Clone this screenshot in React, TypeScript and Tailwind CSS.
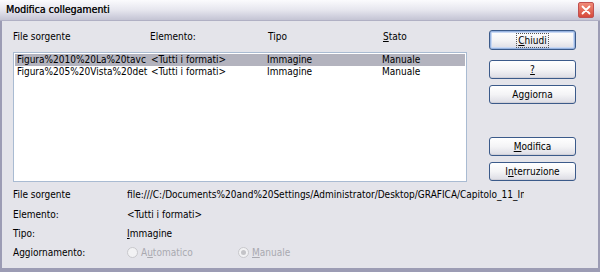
import { ReactNode } from "react";

const font = { fontFamily: '"DejaVu Sans Condensed", "Liberation Sans", Arial, sans-serif' };

function U({ children }: { children: ReactNode }) {
  return <span className="underline underline-offset-[1px]">{children}</span>;
}

function XpButton({
  children,
  isDefault = false,
}: {
  children: ReactNode;
  isDefault?: boolean;
}) {
  return (
    <button
      className={
        "w-[87px] rounded-[3px] border border-[#3b5a8a] bg-gradient-to-b from-[#ffffff] via-[#f4f4f6] to-[#dcdce4] text-black flex items-center justify-center " +
        (isDefault
          ? "h-[20px] shadow-[inset_0_0_0_1px_#98b4e0,inset_0_0_0_2px_#c8d8f4]"
          : "h-[19px] shadow-[inset_0_-1px_0_#d0d0d8]")
      }
    >
      {isDefault ? (
        <span className="outline outline-1 outline-dotted outline-[#555] px-[1px] leading-[13px]">
          {children}
        </span>
      ) : (
        children
      )}
    </button>
  );
}

function Radio({ checked, label }: { checked: boolean; label: ReactNode }) {
  return (
    <div className="flex items-center gap-[3px] text-[#a9a9b0]">
      <span className="w-[11px] h-[11px] rounded-full border border-[#c8c8cc] bg-[#f2f2f4] flex items-center justify-center">
        {checked && <span className="w-[5px] h-[5px] rounded-full bg-[#c4c4c8]" />}
      </span>
      <span>{label}</span>
    </div>
  );
}

const rows = [
  { file: "Figura%2010%20La%20tavc", el: "<Tutti i formati>", tipo: "Immagine", stato: "Manuale" },
  { file: "Figura%205%20Vista%20det", el: "<Tutti i formati>", tipo: "Immagine", stato: "Manuale" },
];

export default function App() {
  return (
    <div
      className="w-[600px] h-[272px] bg-[#9c9cb4] p-[2px] pt-0 flex flex-col text-[10px] text-black overflow-hidden"
      style={font}
    >
      {/* title bar */}
      <div className="h-[21px] -mx-[2px] px-[6px] flex items-center justify-between bg-gradient-to-b from-[#fbfbfd] via-[#e6e6ee] to-[#c4c4d4] border-b border-[#b0b0c4]">
        <span className="text-[10.5px] text-[#101010] [text-shadow:0.3px_0_0_#101010]">Modifica collegamenti</span>
        <div className="w-[16px] h-[16px] rounded-[2px] border border-[#c05050] bg-gradient-to-b from-[#f08a78] to-[#d64a3a] flex items-center justify-center">
          <svg width="10" height="10" viewBox="0 0 10 10">
            <path d="M1.5 1.5 L8.5 8.5 M8.5 1.5 L1.5 8.5" stroke="#fff" strokeWidth="1.8" strokeLinecap="round" />
          </svg>
        </div>
      </div>

      {/* body */}
      <div className="flex-1 bg-[#e4e4ea] flex mb-[2px]">
        <div className="w-[476px] shrink-0 pl-[11px] pt-[8px] flex flex-col">
          <div className="flex h-[15px] items-center">
            <span className="w-[137px] shrink-0">File sorgente</span>
            <span className="w-[118px] shrink-0">Elemento:</span>
            <span className="w-[115px] shrink-0">Tipo</span>
            <span>
              <U>S</U>tato
            </span>
          </div>
          <div className="mt-[8px] w-[454px] h-[130px] border border-[#a9bbd2] bg-white p-[1px]">
            {rows.map((r, i) => (
              <div
                key={i}
                className={"flex h-[12px] items-center leading-[12px] " + (i === 0 ? "bg-[#b3b3be]" : "")}
              >
                <span className="w-[136px] shrink-0 pl-[2px] whitespace-nowrap overflow-hidden">{r.file}</span>
                <span className="w-[116px] shrink-0">{r.el}</span>
                <span className="w-[115px] shrink-0">{r.tipo}</span>
                <span>{r.stato}</span>
              </div>
            ))}
          </div>
          <div className="mt-[2px] flex flex-col">
            <div className="flex h-[20px] items-center">
              <span className="w-[114px] shrink-0">File sorgente</span>
              <span className="whitespace-nowrap overflow-hidden w-[397px] shrink-0">
                file:///C:/Documents%20and%20Settings/Administrator/Desktop/GRAFICA/Capitolo_11_Imr
              </span>
            </div>
            <div className="flex h-[20px] items-center">
              <span className="w-[114px] shrink-0">Elemento:</span>
              <span>{"<Tutti i formati>"}</span>
            </div>
            <div className="flex h-[19px] items-center">
              <span className="w-[114px] shrink-0">Tipo:</span>
              <span>
                <U>I</U>mmagine
              </span>
            </div>
            <div className="flex h-[19px] items-center">
              <span className="w-[114px] shrink-0">Aggiornamento:</span>
              <div className="w-[111px] shrink-0">
                <Radio
                  checked={false}
                  label={
                    <>
                      A<U>u</U>tomatico
                    </>
                  }
                />
              </div>
              <Radio
                checked
                label={
                  <>
                    <U>M</U>anuale
                  </>
                }
              />
            </div>
          </div>
        </div>

        <div className="pl-[11px] pt-[9px] flex flex-col">
          <XpButton isDefault>
            <U>C</U>hiudi
          </XpButton>
          <div className="mt-[10px] flex flex-col gap-[6px]">
            <XpButton>
              <U>?</U>
            </XpButton>
            <XpButton>Aggiorna</XpButton>
          </div>
          <div className="mt-[33px] flex flex-col gap-[6px]">
            <XpButton>
              <U>M</U>odifica
            </XpButton>
            <XpButton>
              I<U>n</U>terruzione
            </XpButton>
          </div>
        </div>
      </div>
    </div>
  );
}
